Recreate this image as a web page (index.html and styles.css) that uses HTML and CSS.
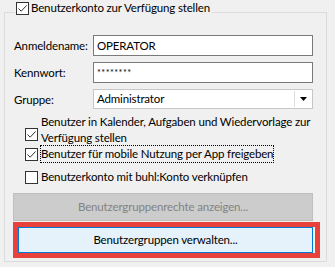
FILE: index.html
```html
<!DOCTYPE html>
<html lang="de">
<head>
<meta charset="utf-8">
<title>Benutzerkonto</title>
<link rel="stylesheet" href="styles.css">
</head>
<body>
<div class="group">
  <label class="legend">
    <span class="cb"><svg viewBox="0 0 13 13" width="13" height="13"><path d="M2.5 6.5 L5.2 9.2 L10.6 3.4" fill="none" stroke="#333" stroke-width="1"/></svg></span>
    <span class="legend-text">Benutzerkonto zur Verfügung stellen</span>
  </label>
  <div class="fields">
    <span class="lbl">Anmeldename:</span>
    <div class="input">OPERATOR</div>
    <span class="lbl">Kennwort:</span>
    <div class="input pw">********</div>
    <span class="lbl">Gruppe:</span>
    <div class="select">
      <span class="val">Administrator</span>
      <span class="drop"><svg viewBox="0 0 7 4" width="7" height="4"><path d="M0 0 H7 L3.5 4 Z" fill="#000"/></svg></span>
    </div>
  </div>
  <div class="checks">
    <label class="check two">
      <span class="cb"><svg viewBox="0 0 13 13" width="13" height="13"><path d="M2.5 6.5 L5.2 9.2 L10.6 3.4" fill="none" stroke="#333" stroke-width="1"/></svg></span>
      <span class="ctext">Benutzer in Kalender, Aufgaben und Wiedervorlage zur<br>Verfügung stellen</span>
    </label>
    <label class="check">
      <span class="cb"><svg viewBox="0 0 13 13" width="13" height="13"><path d="M2.5 6.5 L5.2 9.2 L10.6 3.4" fill="none" stroke="#333" stroke-width="1"/></svg></span>
      <span class="ctext focus">Benutzer für mobile Nutzung per App freigeben</span>
    </label>
    <label class="check third">
      <span class="cb"></span>
      <span class="ctext">Benutzerkonto mit buhl:Konto verknüpfen</span>
    </label>
  </div>
  <div class="btn disabled">Benutzergruppenrechte anzeigen...</div>
  <div class="highlight">
    <div class="btn active">Benutzergruppen verwalten...</div>
  </div>
</div>
</body>
</html>
```

FILE: styles.css
```css
html, body {
  margin: 0;
  padding: 0;
  background: #f0f0f0;
}
body {
  font-family: Lato, "Liberation Sans", sans-serif;
  font-size: 11.5px;
  letter-spacing: -0.15px;
  color: #000;
  width: 335px;
  height: 267px;
  overflow: hidden;
}
.group {
  position: relative;
  margin: 12px 8px 0 4px;
  border: 1px solid #dcdcdc;
  padding: 22px 0 0 0;
  box-sizing: border-box;
  height: 250px;
}
.legend {
  position: absolute;
  top: -13px;
  left: 10px;
  display: flex;
  align-items: center;
  gap: 2px;
  padding: 0 2px 0 1px;
  background: #f0f0f0;
  line-height: 16px;
  white-space: nowrap;
}
.cb {
  flex: none;
  width: 13px;
  height: 13px;
  box-sizing: border-box;
  border: 1px solid #333;
  background: #fff;
  display: flex;
  align-items: center;
  justify-content: center;
  overflow: hidden;
}
.cb svg {
  display: block;
  flex: none;
}
.fields {
  display: grid;
  grid-template-columns: 79px 1fr;
  grid-template-rows: 21px 21px 20px;
  row-gap: 6px;
  padding: 0 13px 0 9px;
  align-items: center;
}
.lbl {
  line-height: 21px;
}
.input {
  height: 21px;
  box-sizing: border-box;
  border: 1px solid #7a7a7a;
  background: #fff;
  padding: 0 3px;
  line-height: 19px;
}
.input.pw {
  font-size: 9px;
  letter-spacing: 0.5px;
}
.select {
  height: 20px;
  box-sizing: border-box;
  border: 1px solid #c6c6c6;
  background: #fff;
  display: flex;
  align-items: stretch;
  padding: 1px;
}
.select .val {
  flex: 1;
  padding-left: 2px;
  line-height: 16px;
}
.select .drop {
  width: 16px;
  flex: none;
  border-left: 1px solid #dcdcdc;
  background: #fff;
  display: flex;
  align-items: center;
  justify-content: center;
}
.checks {
  padding: 5px 0 0 20px;
  display: flex;
  flex-direction: column;
}
.check {
  display: flex;
  align-items: center;
  gap: 3px;
  line-height: 16px;
  white-space: nowrap;
}
.check.two .cb {
  align-self: flex-start;
  margin-top: 14px;
}
.check.third {
  margin-top: 7px;
}
.ctext.focus {
  outline: 1px dotted #000;
  outline-offset: 0;
}
.btn {
  text-align: center;
  box-sizing: border-box;
}
.btn.disabled {
  margin: 8px 13px 0 8px;
  height: 28px;
  line-height: 26px;
  background: #cccccc;
  border: 1px solid #bfbfbf;
  color: #838383;
}
.highlight {
  margin: 1px 6px 0 8px;
  border: 5px solid #e8413b;
  padding: 0 2px 0 0;
}
.btn.active {
  height: 26px;
  line-height: 24px;
  background: #e5f1fb;
  border: 1px solid #0078d7;
  color: #000;
}
```
